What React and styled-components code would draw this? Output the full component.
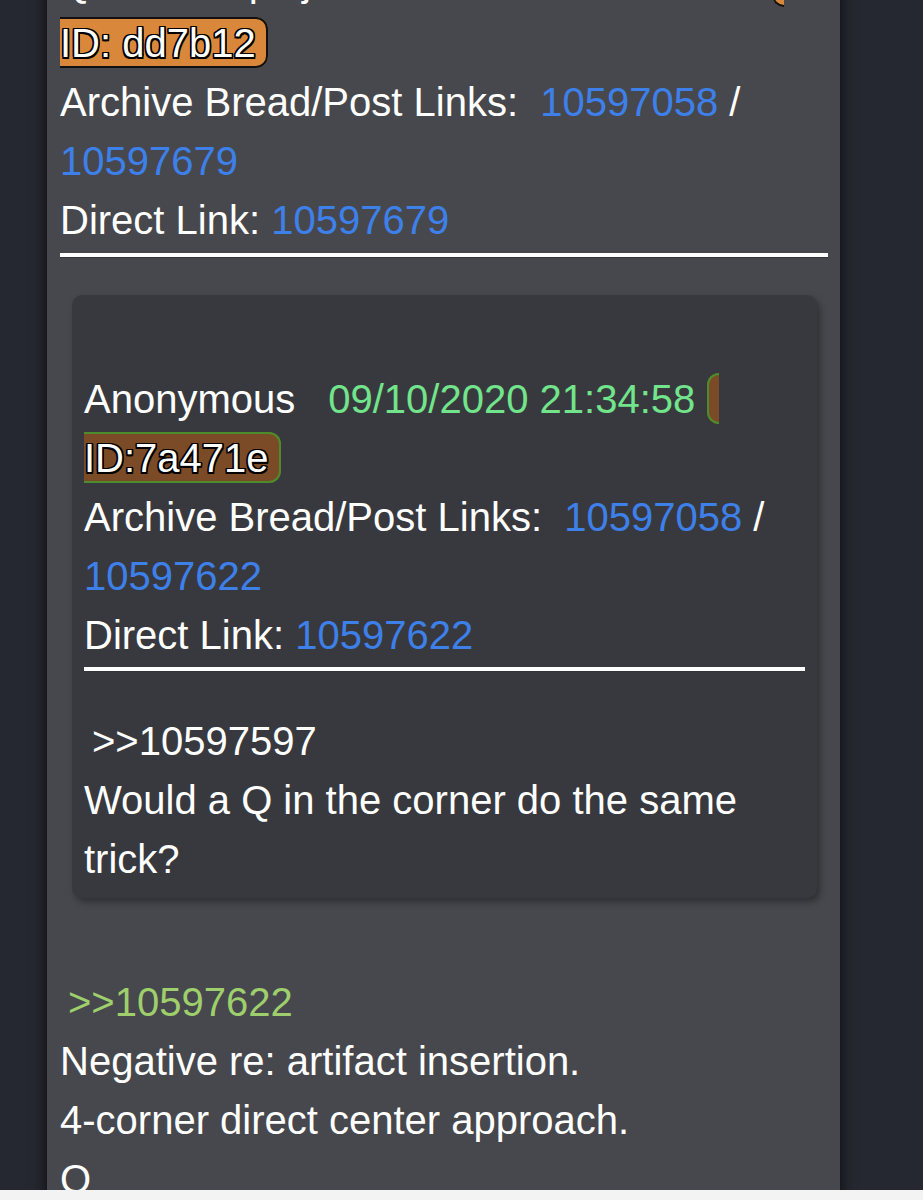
import React from 'react'
import styled, { createGlobalStyle } from 'styled-components'

const GlobalStyle = createGlobalStyle`
  html, body {
    margin: 0;
    padding: 0;
    background: #252830;
  }
  body {
    font-family: 'Liberation Sans', Arial, Helvetica, sans-serif;
  }
`

const Screen = styled.div`
  height: 1200px;
  display: flex;
  flex-direction: column;
  overflow: hidden;
`

const Viewport = styled.div`
  height: 1190px;
  overflow: hidden;
  background: #252830;
`

const BottomEdge = styled.div`
  flex: 1;
  background: #f3f3f4;
`

// scrolled: the first header line sits mostly above the top edge
const Panel = styled.div`
  margin: -50px 0 0 47px;
  width: 793px;
  box-sizing: border-box;
  padding: 0 12px 0 13px;
  background: #47484d;
  box-shadow: 0 0 14px rgba(0, 0, 0, 0.75);
  color: #ffffff;
  font-size: 40px;
  line-height: 59px;
  min-height: 1300px;
`

const Line = styled.div`
  color: ${props => (props.greentext ? '#9fcf6c' : '#ffffff')};
  padding-left: ${props => (props.indent ? '8px' : '0')};
`

const Lead = styled.span`
  line-height: ${props => (props.tall ? '64px' : '59px')};
`

const Name = styled.span`
  color: #ffffff;
`

const Trip = styled.span`
  margin-left: 31px;
`

const Stamp = styled.span`
  color: #72e48b;
  margin-left: 33px;
`

const Tag = styled.span`
  margin-left: 12px;
  padding: 2px 10px 1px;
  border: 2px solid ${props => props.edge};
  border-radius: 12px;
  background: ${props => props.fill};
  color: #ffffff;
  text-shadow: -1.5px -1.5px 0 #000, 1.5px -1.5px 0 #000, -1.5px 1.5px 0 #000,
    1.5px 1.5px 0 #000, 0 1.5px 0 #000, 0 -1.5px 0 #000, 1.5px 0 0 #000, -1.5px 0 0 #000;
`

const Link = styled.span`
  color: #3e80ea;
`

const Rule = styled.div`
  margin-top: 3px;
  height: 4px;
  background: #ffffff;
  border-bottom: 1px solid #34353a;
`

const Card = styled.div`
  margin: 37px 11px 75px 12px;
  padding: 75px 12px 9px;
  background: #38393e;
  border-radius: 10px;
  box-shadow: 3px 4px 7px rgba(0, 0, 0, 0.35);
`

const CardRule = styled(Rule)`
  margin-top: 2px;
  margin-bottom: 40px;
`

function PostHeader({ name, trip, stamp, id, fill, edge, tall }) {
  return (
    <Line>
      <Lead tall={tall}>
        <Name>{name}</Name>
        {trip && <Trip>{trip}</Trip>}
        <Stamp>{stamp}</Stamp>
      </Lead>
      <Tag fill={fill} edge={edge}>
        <br />
        {id}
      </Tag>
    </Line>
  )
}

function Links({ bread, post }) {
  return (
    <>
      <Line>
        Archive Bread/Post Links:&nbsp; <Link>{bread}</Link> / <Link>{post}</Link>
      </Line>
      <Line>
        Direct Link: <Link>{post}</Link>
      </Line>
    </>
  )
}

export default function App() {
  return (
    <>
      <GlobalStyle />
      <Screen>
        <Viewport>
          <Panel>
            <PostHeader
              tall
              name="Q"
              trip="!!Hs1Jq13jV6"
              stamp="09/10/2020 21:38:41"
              id="ID: dd7b12"
              fill="#d9883b"
              edge="#111111"
            />
            <Links bread="10597058" post="10597679" />
            <Rule />
            <Card>
              <PostHeader
                name="Anonymous"
                stamp="09/10/2020 21:34:58"
                id="ID:7a471e"
                fill="#7a4b26"
                edge="#4c8c2a"
              />
              <Links bread="10597058" post="10597622" />
              <CardRule />
              <Line indent>&gt;&gt;10597597</Line>
              <Line>Would a Q in the corner do the same trick?</Line>
            </Card>
            <Line greentext indent>&gt;&gt;10597622</Line>
            <Line>Negative re: artifact insertion.</Line>
            <Line>4-corner direct center approach.</Line>
            <Line>Q</Line>
          </Panel>
        </Viewport>
        <BottomEdge />
      </Screen>
    </>
  )
}
